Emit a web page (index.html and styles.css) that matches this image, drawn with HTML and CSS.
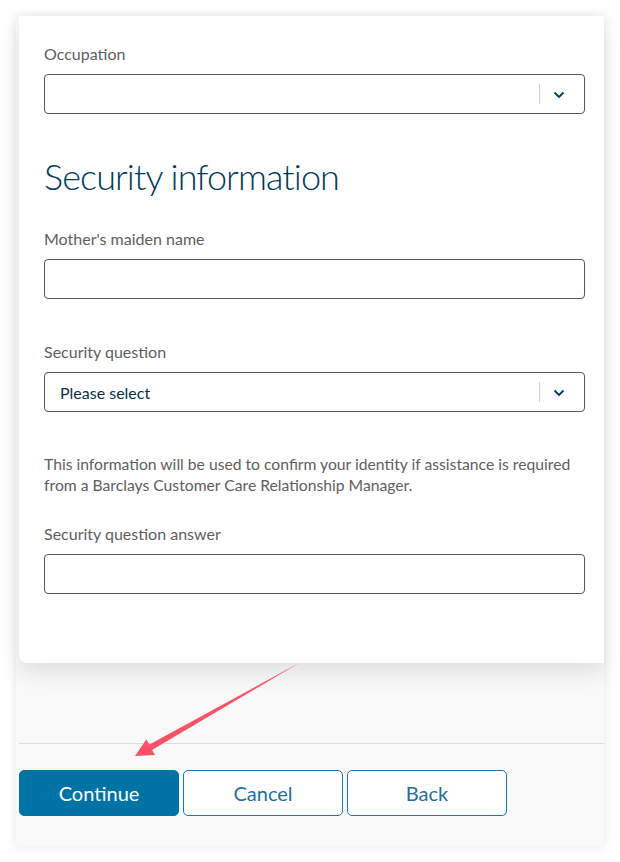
FILE: index.html
```html
<!DOCTYPE html>
<html>
<head>
<meta charset="utf-8">
<link rel="stylesheet" href="styles.css">
</head>
<body>
<div class="panel">
  <div class="card">
    <div class="field">
      <label class="label">Occupation</label>
      <div class="select">
        <span class="select-value"></span>
        <span class="select-sep"></span>
        <svg class="chev" width="12" height="8" viewBox="0 0 12 8"><path d="M1.5 1.5 L6 6 L10.5 1.5" fill="none" stroke="#00395d" stroke-width="1.8"/></svg>
      </div>
    </div>
    <h2 class="heading">Security information</h2>
    <div class="field first">
      <label class="label">Mother's maiden name</label>
      <div class="input"></div>
    </div>
    <div class="field">
      <label class="label">Security question</label>
      <div class="select">
        <span class="select-value">Please select</span>
        <span class="select-sep"></span>
        <svg class="chev" width="12" height="8" viewBox="0 0 12 8"><path d="M1.5 1.5 L6 6 L10.5 1.5" fill="none" stroke="#00395d" stroke-width="1.8"/></svg>
      </div>
    </div>
    <p class="info">This information will be used to confirm your identity if assistance is required from a Barclays Customer Care Relationship Manager.</p>
    <div class="field after-info">
      <label class="label">Security question answer</label>
      <div class="input"></div>
    </div>
  </div>
  <div class="footer">
    <div class="divider"></div>
    <div class="buttons">
      <button class="btn primary">Continue</button>
      <button class="btn outline">Cancel</button>
      <button class="btn outline">Back</button>
    </div>
  </div>
</div>
<svg class="arrow" width="620" height="862" viewBox="0 0 620 862">
  <polygon points="135,756 146.3,739.4 149.4,744.4 300,662.5 152,749.9 155.1,755" fill="#ff5066"/>
</svg>
</body>
</html>
```
FILE: styles.css
```css
html, body {
  margin: 0;
  padding: 0;
  background: #ffffff;
}
body {
  font-family: Lato, "Open Sans", sans-serif;
  position: relative;
  width: 620px;
  height: 862px;
  overflow: hidden;
}
.panel {
  margin: 16px 0 0 16px;
  width: 588px;
  height: 830px;
  background: #f9f9f9;
  box-shadow: 0 0 10px rgba(0,0,0,0.10);
  display: flex;
  flex-direction: column;
}
.card {
  margin-left: 3px;
  width: 585px;
  height: 647px;
  box-sizing: border-box;
  background: #ffffff;
  border-radius: 0 0 0 8px;
  box-shadow: 0 10px 22px rgba(0,0,0,0.10);
  padding: 28px 19px 0 25px;
  position: relative;
}
.field {
  display: flex;
  flex-direction: column;
  gap: 10px;
}
.field + .field {
  margin-top: 43px;
}
.field.first {
  margin-top: 31px;
}
.field.after-info {
  margin-top: 28px;
}
.label {
  font-size: 16px;
  line-height: 20px;
  color: #5e5e5e;
}
.select, .input {
  height: 40px;
  box-sizing: border-box;
  border: 1px solid #575757;
  border-radius: 4px;
  background: #fff;
}
.select {
  display: flex;
  align-items: center;
}
.select-value {
  flex: 1;
  padding-left: 15px;
  font-size: 16px;
  color: #0a2f4c;
}
.select-sep {
  width: 1px;
  height: 20px;
  background: #d0d0d0;
}
.chev {
  margin: 1px 19px 0 13px;
}
.heading {
  margin: 40px 0 0 0;
  font-weight: 300;
  font-size: 36px;
  line-height: 44px;
  color: #00395d;
  letter-spacing: -0.9px;
}
.info {
  margin: 42px 0 0 0;
  font-size: 15.7px;
  line-height: 21px;
  color: #5e5e5e;
}
.footer {
  display: flex;
  flex-direction: column;
}
.divider {
  margin: 80px 0 0 3px;
  height: 1px;
  background: #dcdcdc;
}
.buttons {
  margin: 26px 0 0 3px;
  display: flex;
  gap: 4px;
}
.btn {
  width: 160px;
  height: 46px;
  border-radius: 5px;
  font-family: Lato, "Open Sans", sans-serif;
  font-size: 20px;
  box-sizing: border-box;
  padding: 0;
}
.primary {
  background: #0073a6;
  border: 1px solid #0073a6;
  color: #ffffff;
}
.outline {
  background: #ffffff;
  border: 1px solid #1b78ae;
  color: #1d6fa0;
}
.arrow {
  position: absolute;
  left: 0;
  top: 0;
  pointer-events: none;
}
```
